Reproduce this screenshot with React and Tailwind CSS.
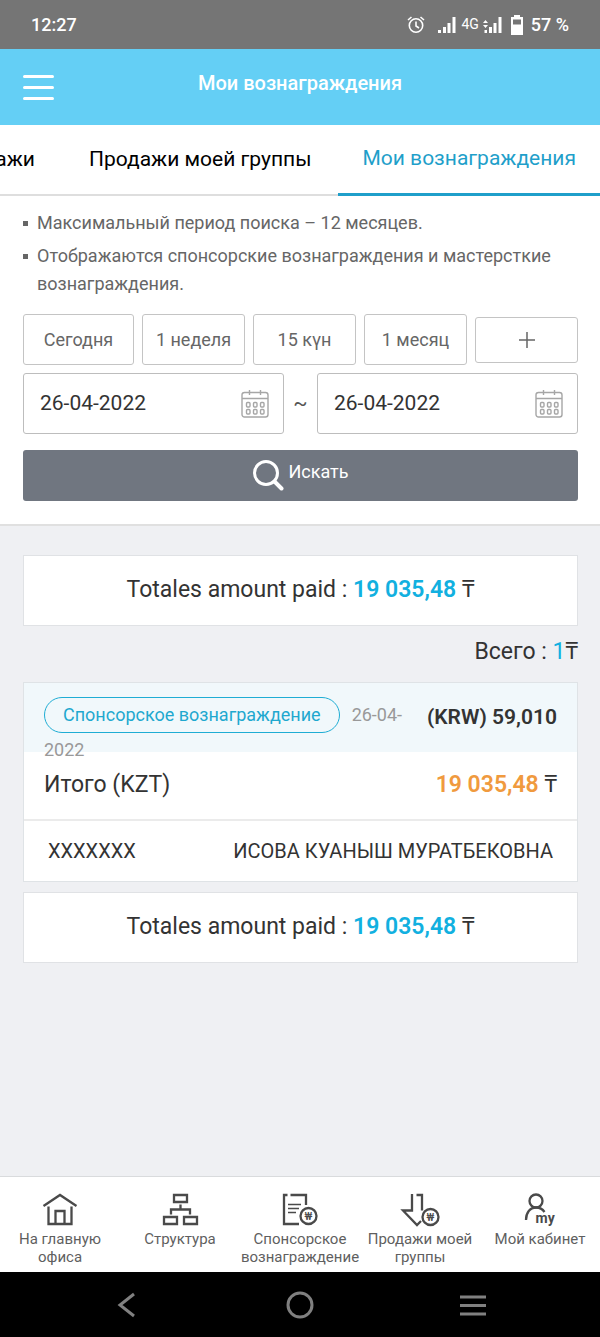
import React, { useState } from 'react';

const tabs = ['Мои продажи', 'Продажи моей группы', 'Мои вознаграждения'];

const periods = ['Сегодня', '1 неделя', '15 күн', '1 месяц'];

const HomeIcon = () => (
    <svg className="h-9 w-10" viewBox="0 0 40 36" fill="none" stroke="#4a4a4a" strokeWidth="2.300">
        <path d="M3.500 15 20 4l16.500 11" />
        <path d="M8.500 15.500V33h23V15.500" />
        <path d="M15.500 33V20h9v13" />
    </svg>
);

const StructureIcon = () => (
    <svg className="h-9 w-10" viewBox="0 0 40 36" fill="none" stroke="#4a4a4a" strokeWidth="2.300">
        <path d="M14 4h13v7H14zM4 26h13v7H4zM24 26h13v7H24z" />
        <path d="M20.500 13.500V18.500M11 23.500v-5h19v5" />
    </svg>
);

const BonusIcon = () => (
    <svg className="h-9 w-10" viewBox="0 0 40 36" fill="none" stroke="#4a4a4a" strokeWidth="2.300">
        <path d="M7.500 4H4v29h15M10.500 4H26v10" />
        <path d="M8 13.500h13M8 17.500h11M8 21.500h8" strokeWidth="1.600" />
        <circle cx="28.500" cy="25" r="8" />
        <text x="28.500" y="28.500" textAnchor="middle" fontSize="10" fontWeight="500" fill="#4a4a4a" stroke="none">₩</text>
    </svg>
);

const SalesIcon = () => (
    <svg className="h-9 w-10" viewBox="0 0 40 36" fill="none" stroke="#4a4a4a" strokeWidth="2.300">
        <path d="M12 3v16.500H3l14 14.500 4-4" />
        <path d="M16.500 4H22v15.500" />
        <circle cx="30.500" cy="26" r="8" />
        <text x="30.500" y="29.500" textAnchor="middle" fontSize="10" fontWeight="500" fill="#4a4a4a" stroke="none">₩</text>
    </svg>
);

const ProfileIcon = () => (
    <svg className="h-9 w-10" viewBox="0 0 40 36" fill="none" stroke="#4a4a4a" strokeWidth="2.300">
        <circle cx="16" cy="10" r="6.500" />
        <path d="M6 29c0-7.500 4-12.500 10-12.500 4 0 6.500 1.500 8.500 4.500" />
        <text x="15.500" y="32" fontSize="14" fontWeight="700" fill="#4a4a4a" stroke="none">my</text>
    </svg>
);

const navItems = [
    { label: 'На главную офиса', Icon: HomeIcon },
    { label: 'Структура', Icon: StructureIcon },
    { label: 'Спонсорское вознаграждение', Icon: BonusIcon },
    { label: 'Продажи моей группы', Icon: SalesIcon },
    { label: 'Мой кабинет', Icon: ProfileIcon },
];

const CalendarIcon = () => (
    <svg className="h-7 w-7" viewBox="0 0 28 28" fill="none" stroke="#a6a6a6" strokeWidth="1.400">
        <rect x="1" y="2.500" width="26" height="24.500" rx="2.500" />
        <path d="M1 8.500h26M8.500 0v5M19.500 0v5" />
        {[6, 13, 20].map((x) => (
            <g key={x}>
                <rect x={x - 0.5} y="12.500" width="3.500" height="4.500" rx="1" />
                <rect x={x - 0.5} y="19.500" width="3.500" height="4.500" rx="1" />
            </g>
        ))}
    </svg>
);

const StatusBar = () => (
    <div className="flex h-[49px] items-center justify-between bg-[#757575] px-[31px] text-[18px] font-medium text-white">
        <span>12:27</span>
        <div className="flex items-center">
            <svg className="mr-3 h-[18px] w-[18px]" viewBox="0 0 18 18" fill="none" stroke="white" strokeWidth="1.600">
                <circle cx="9" cy="9.500" r="6.700" />
                <path d="M9 5.500v4.500l3 2M1 4l3.500-3M17 4l-3.500-3" />
            </svg>
            <svg className="mr-1 h-4 w-5" viewBox="0 0 20 16" fill="white">
                <path d="M1 13h3v3H1zM6 10h3v6H6zM10.500 6h3v10h-3zM15.500 0h3v16h-3z" />
            </svg>
            <span className="mr-1 text-[14px] font-normal">4G</span>
            <svg className="mr-2 h-4 w-5" viewBox="0 0 20 16" fill="white">
                <path d="M1.500 13h2.500v3H1.500zM6 10h3v6H6zM10.500 6h3v10h-3zM15.500 0h3v16h-3z" />
                <path d="M0 6l2.500-3L5 6zM0 8l2.500 3L5 8z" />
            </svg>
            <svg className="mr-2 h-5 w-3" viewBox="0 0 12 20">
                <path d="M3 0h6v2h3v18H0V2h3z" fill="white" />
                <path d="M2 4.500h8v5H2z" fill="#757575" />
            </svg>
            <span>57 %</span>
        </div>
    </div>
);

const DateField = ({ label, value, onChange }) => (
    <div className="flex h-[61px] min-w-0 flex-1 items-center rounded-[3px] border border-[#bdbdbd] pr-3.5 pl-4">
        <input
            type="text"
            aria-label={label}
            value={value}
            onChange={(e) => onChange(e.target.value)}
            className="w-full min-w-0 flex-1 text-[21px] text-[#333333] outline-none"
        />
        <button aria-label="Календарь">
            <CalendarIcon />
        </button>
    </div>
);

const TotalCard = () => (
    <div className="flex h-[71px] items-center justify-center border border-[#e0e2e5] bg-white text-[23px] text-[#333333]">
        <p>
            Totales amount paid : <strong className="font-semibold text-[#12b0e0]">19 035,48</strong> ₸
        </p>
    </div>
);

const App = () => {
    const [activeTab, setActiveTab] = useState(2);
    const [from, setFrom] = useState('26-04-2022');
    const [to, setTo] = useState('26-04-2022');

    return (
        <div className="flex min-h-screen flex-col overflow-x-hidden bg-[#eff0f3] font-[Roboto,'Noto_Sans',sans-serif]">
            <StatusBar />

            <header className="grid h-[76px] grid-cols-[60px_1fr_60px] items-center bg-[#64cff5]">
                <button aria-label="Меню" className="flex flex-col gap-2 pl-[23px]">
                    <span className="h-[3px] w-[31px] rounded-full bg-white"></span>
                    <span className="h-[3px] w-[31px] rounded-full bg-white"></span>
                    <span className="h-[3px] w-[31px] rounded-full bg-white"></span>
                </button>
                <h1 className="pb-2 text-center text-[20px] font-medium text-white">Мои вознаграждения</h1>
            </header>

            <nav className="flex h-[71px] justify-end overflow-hidden bg-white">
                {tabs.map((tab, i) => (
                    <button
                        key={tab}
                        onClick={() => setActiveTab(i)}
                        className={
                            i === activeTab
                                ? 'shrink-0 border-b-3 border-[#1f9fca] px-6 text-[21px] whitespace-nowrap text-[#1f9fca]'
                                : 'shrink-0 border-b-2 border-[#dedede] px-[27px] text-[21px] whitespace-nowrap text-black'
                        }
                    >
                        {tab}
                    </button>
                ))}
            </nav>

            <section className="border-b-2 border-[#e0e0e0] bg-white pt-[13px] pr-[22px] pb-[23px] pl-[23px]">
                <ul className="flex flex-col gap-[5px] text-[18px] leading-7 text-[#666666]">
                    <li className="flex gap-[9px]">
                        <span className="mt-3 size-[5px] shrink-0 bg-[#666666]"></span>
                        Максимальный период поиска – 12 месяцев.
                    </li>
                    <li className="flex gap-[9px]">
                        <span className="mt-3 size-[5px] shrink-0 bg-[#666666]"></span>
                        Отображаются спонсорские вознаграждения и мастерсткие вознаграждения.
                    </li>
                </ul>

                <div className="mt-4 grid grid-cols-[111fr_103fr_103fr_103fr_103fr] items-center gap-2 text-[18px] text-[#666666]">
                    {periods.map((period) => (
                        <button key={period} className="h-[51px] rounded-[3px] border border-[#c4c4c4] whitespace-nowrap">
                            {period}
                        </button>
                    ))}
                    <button aria-label="Ещё" className="flex h-[46px] items-center justify-center rounded-[3px] border border-[#c4c4c4]">
                        <svg className="h-4 w-4" viewBox="0 0 16 16" stroke="#666666" strokeWidth="1.500">
                            <path d="M8 0v16M0 8h16" />
                        </svg>
                    </button>
                </div>

                <div className="mt-2 flex items-center">
                    <DateField label="Дата начала" value={from} onChange={setFrom} />
                    <span className="w-[33px] text-center text-[21px] text-[#555555]">~</span>
                    <DateField label="Дата окончания" value={to} onChange={setTo} />
                </div>

                <button className="mt-4 flex h-[51px] w-full items-center justify-center gap-1 rounded-[3px] bg-[#707680] text-[18px] text-white">
                    <svg className="h-8 w-8" viewBox="0 0 32 32" fill="none" stroke="white" strokeWidth="3" strokeLinecap="round">
                        <circle cx="14" cy="13" r="11.500" />
                        <path d="M22.500 21.500 29.500 28.500" strokeWidth="4" />
                    </svg>
                    <span className="pb-2">Искать</span>
                </button>
            </section>

            <main className="flex-1 pt-[29px] pr-[22px] pb-8 pl-[23px]">
                <TotalCard />

                <p className="flex h-[56px] items-center justify-end pb-1 text-[23px] text-[#333333]">
                    <span>
                        Всего : <span className="text-[#12b0e0]">1</span>₸
                    </span>
                </p>

                <article className="mb-2.5 border border-[#dfe3e6] bg-white text-[#333333]">
                    {/* the date wraps below the badge and runs over the tinted strip */}
                    <div className="flex h-[69px] items-start justify-between bg-[#f1f8fb] px-5 pt-3.5">
                        <div className="min-w-0 flex-1 text-[18px] leading-[34px] text-[#999999]">
                            <span className="mr-3 inline-block rounded-full border border-[#1fadd4] px-[18px] leading-[34px] whitespace-nowrap text-[#1fa8cf]">
                                Спонсорское вознаграждение
                            </span>
                            26-04-
                            <wbr />
                            2022
                        </div>
                        <strong className="text-[21px] leading-10 font-semibold whitespace-nowrap">(KRW) 59,010</strong>
                    </div>
                    <div className="flex h-[69px] items-center justify-between border-b-2 border-[#ebebeb] px-5 text-[23px]">
                        <span>Итого (KZT)</span>
                        <span>
                            <strong className="font-semibold text-[#f09a3e]">19 035,48</strong> ₸
                        </span>
                    </div>
                    <div className="flex h-[60px] items-center justify-between px-6 text-[20px]">
                        <span>XXXXXXX</span>
                        <span>ИСОВА КУАНЫШ МУРАТБЕКОВНА</span>
                    </div>
                </article>

                <TotalCard />
            </main>

            <nav className="grid h-[96px] grid-cols-5 border-t border-[#d9dbdd] bg-white pt-3.5">
                {navItems.map(({ label, Icon }) => (
                    <a key={label} href="#" className="flex min-w-0 flex-col items-center text-center text-[15px] leading-[18px] text-[#5f5f5f]">
                        <Icon />
                        <span className="mt-[3px]">{label}</span>
                    </a>
                ))}
            </nav>

            <div className="grid h-[65px] grid-cols-3 items-center justify-items-center bg-black px-10">
                <button aria-label="Назад">
                    <svg className="h-8 w-8" viewBox="0 0 32 32" fill="none" stroke="#808080" strokeWidth="3">
                        <path d="M23 5 9 16l14 11" />
                    </svg>
                </button>
                <button aria-label="Домой">
                    <svg className="h-8 w-8" viewBox="0 0 32 32" fill="none" stroke="#808080" strokeWidth="3">
                        <circle cx="16" cy="16" r="12" />
                    </svg>
                </button>
                <button aria-label="Недавние">
                    <svg className="h-8 w-8" viewBox="0 0 32 32" fill="none" stroke="#808080" strokeWidth="3">
                        <path d="M3 8h26M3 16.500h26M3 25h26" />
                    </svg>
                </button>
            </div>
        </div>
    );
};

export default App;
